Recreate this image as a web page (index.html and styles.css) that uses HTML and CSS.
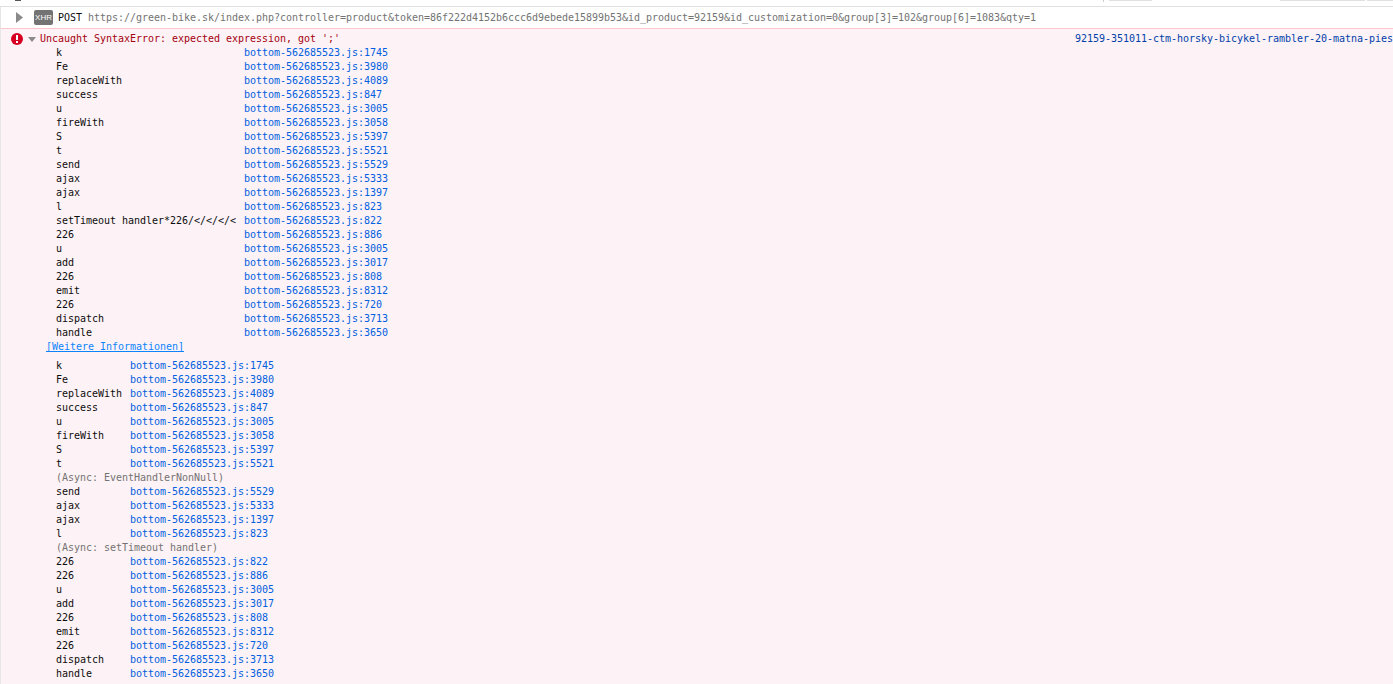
FILE: index.html
```html
<!DOCTYPE html>
<html lang="en">
<head>
<meta charset="utf-8">
<title>Console</title>
<link rel="stylesheet" href="styles.css">
</head>
<body>
<div class="topstrip">
  <i class="tick dark"></i>
  <i class="tick line"></i>
  <i class="tick btn-a"></i>
  <i class="tick btn-b"></i>
  <i class="tick btn-c"></i>
</div>
<div class="xhr">
  <svg class="twisty" width="7" height="11" viewBox="0 0 7 11"><path d="M0 0L7 5.5L0 11Z" fill="#8a8a8a"/></svg>
  <span class="badge">XHR</span>
  <span class="method">POST</span>
  <span class="url">https://green-bike.sk/index.php?controller=product&amp;token=86f222d4152b6ccc6d9ebede15899b53&amp;id_product=92159&amp;id_customization=0&amp;group[3]=102&amp;group[6]=1083&amp;qty=1</span>
</div>
<div class="error">
  <div class="head">
    <svg class="erricon" width="12" height="12" viewBox="0 0 12 12"><circle cx="6" cy="6" r="6" fill="#d70022"/><rect x="5" y="2" width="2" height="5" fill="#fff"/><rect x="5" y="8" width="2" height="2" fill="#fff"/></svg>
    <svg class="arrow" width="8" height="5" viewBox="0 0 8 5"><path d="M0 0H8L4 5Z" fill="#8a8a8a"/></svg>
    <span class="msg">Uncaught SyntaxError: expected expression, got ';'</span>
    <a class="source">92159-351011-ctm-horsky-bicykel-rambler-20-matna-pies</a>
  </div>
  <div class="stack wide">
    <span>k</span><a>bottom-562685523.js:1745</a>
    <span>Fe</span><a>bottom-562685523.js:3980</a>
    <span>replaceWith</span><a>bottom-562685523.js:4089</a>
    <span>success</span><a>bottom-562685523.js:847</a>
    <span>u</span><a>bottom-562685523.js:3005</a>
    <span>fireWith</span><a>bottom-562685523.js:3058</a>
    <span>S</span><a>bottom-562685523.js:5397</a>
    <span>t</span><a>bottom-562685523.js:5521</a>
    <span>send</span><a>bottom-562685523.js:5529</a>
    <span>ajax</span><a>bottom-562685523.js:5333</a>
    <span>ajax</span><a>bottom-562685523.js:1397</a>
    <span>l</span><a>bottom-562685523.js:823</a>
    <span>setTimeout handler*226/&lt;/&lt;/&lt;/&lt;</span><a>bottom-562685523.js:822</a>
    <span>226</span><a>bottom-562685523.js:886</a>
    <span>u</span><a>bottom-562685523.js:3005</a>
    <span>add</span><a>bottom-562685523.js:3017</a>
    <span>226</span><a>bottom-562685523.js:808</a>
    <span>emit</span><a>bottom-562685523.js:8312</a>
    <span>226</span><a>bottom-562685523.js:720</a>
    <span>dispatch</span><a>bottom-562685523.js:3713</a>
    <span>handle</span><a>bottom-562685523.js:3650</a>
  </div>
  <a class="more">[Weitere Informationen]</a>
  <div class="stack narrow">
    <span>k</span><a>bottom-562685523.js:1745</a>
    <span>Fe</span><a>bottom-562685523.js:3980</a>
    <span>replaceWith</span><a>bottom-562685523.js:4089</a>
    <span>success</span><a>bottom-562685523.js:847</a>
    <span>u</span><a>bottom-562685523.js:3005</a>
    <span>fireWith</span><a>bottom-562685523.js:3058</a>
    <span>S</span><a>bottom-562685523.js:5397</a>
    <span>t</span><a>bottom-562685523.js:5521</a>
    <em>(Async: EventHandlerNonNull)</em>
    <span>send</span><a>bottom-562685523.js:5529</a>
    <span>ajax</span><a>bottom-562685523.js:5333</a>
    <span>ajax</span><a>bottom-562685523.js:1397</a>
    <span>l</span><a>bottom-562685523.js:823</a>
    <em>(Async: setTimeout handler)</em>
    <span>226</span><a>bottom-562685523.js:822</a>
    <span>226</span><a>bottom-562685523.js:886</a>
    <span>u</span><a>bottom-562685523.js:3005</a>
    <span>add</span><a>bottom-562685523.js:3017</a>
    <span>226</span><a>bottom-562685523.js:808</a>
    <span>emit</span><a>bottom-562685523.js:8312</a>
    <span>226</span><a>bottom-562685523.js:720</a>
    <span>dispatch</span><a>bottom-562685523.js:3713</a>
    <span>handle</span><a>bottom-562685523.js:3650</a>
  </div>
</div>
</body>
</html>
```
FILE: styles.css
```css
html, body { margin: 0; padding: 0; height: 684px; overflow: hidden; background: #fff; }
body { font: 10px/14px "DejaVu Sans Mono", monospace; letter-spacing: -0.02px; color: #0c0c0d; }
.topstrip { height: 6px; border-bottom: 1px solid #e0e0e1; display: flex; align-items: flex-start; }
.tick { display: block; height: 1px; background: #e0e0e1; }
.dark { margin-left: 15px; width: 6px; background: #555; }
.line { margin-left: 1082px; width: 1px; height: 2px; background: #ccc; }
.btn-a { margin-left: 5px; width: 43px; }
.btn-b { margin-left: 128px; width: 85px; }
.btn-c { margin-left: 2px; width: 26px; }
.xhr { height: 21px; display: flex; align-items: center; border-bottom: 1px solid #f8c6cf; border-left: 1px solid #e6e6e6; }
.twisty { margin-left: 15px; }
.badge { margin-left: 11px; width: 19px; height: 15px; background: #737373; color: #fff; border-radius: 2px; font: 8px/15px "Liberation Sans", sans-serif; letter-spacing: 0; text-align: center; }
.method { margin-left: 5px; }
.url { margin-left: 6px; color: #737373; }
.error { height: 655px; background: #fdf2f5; border-left: 1px solid #e6e6e6; }
.head { height: 20px; display: flex; align-items: center; }
.erricon { margin-left: 10px; }
.arrow { margin-left: 5px; }
.msg { margin-left: 4px; color: #a4000f; }
.source { margin-left: auto; color: #003eaa; white-space: nowrap; width: 318px; overflow: hidden; }
.stack { display: grid; margin-left: 55px; }
.stack em { grid-column: 1 / -1; font-style: normal; color: #737373; }
.wide { grid-template-columns: 188px auto; margin-top: -3px; }
.narrow { grid-template-columns: 74px auto; margin-top: 5px; }
.stack a { color: #0060df; }
.more { display: block; margin: 0 0 0 45px; color: #0a84ff; text-decoration: underline; }
```
